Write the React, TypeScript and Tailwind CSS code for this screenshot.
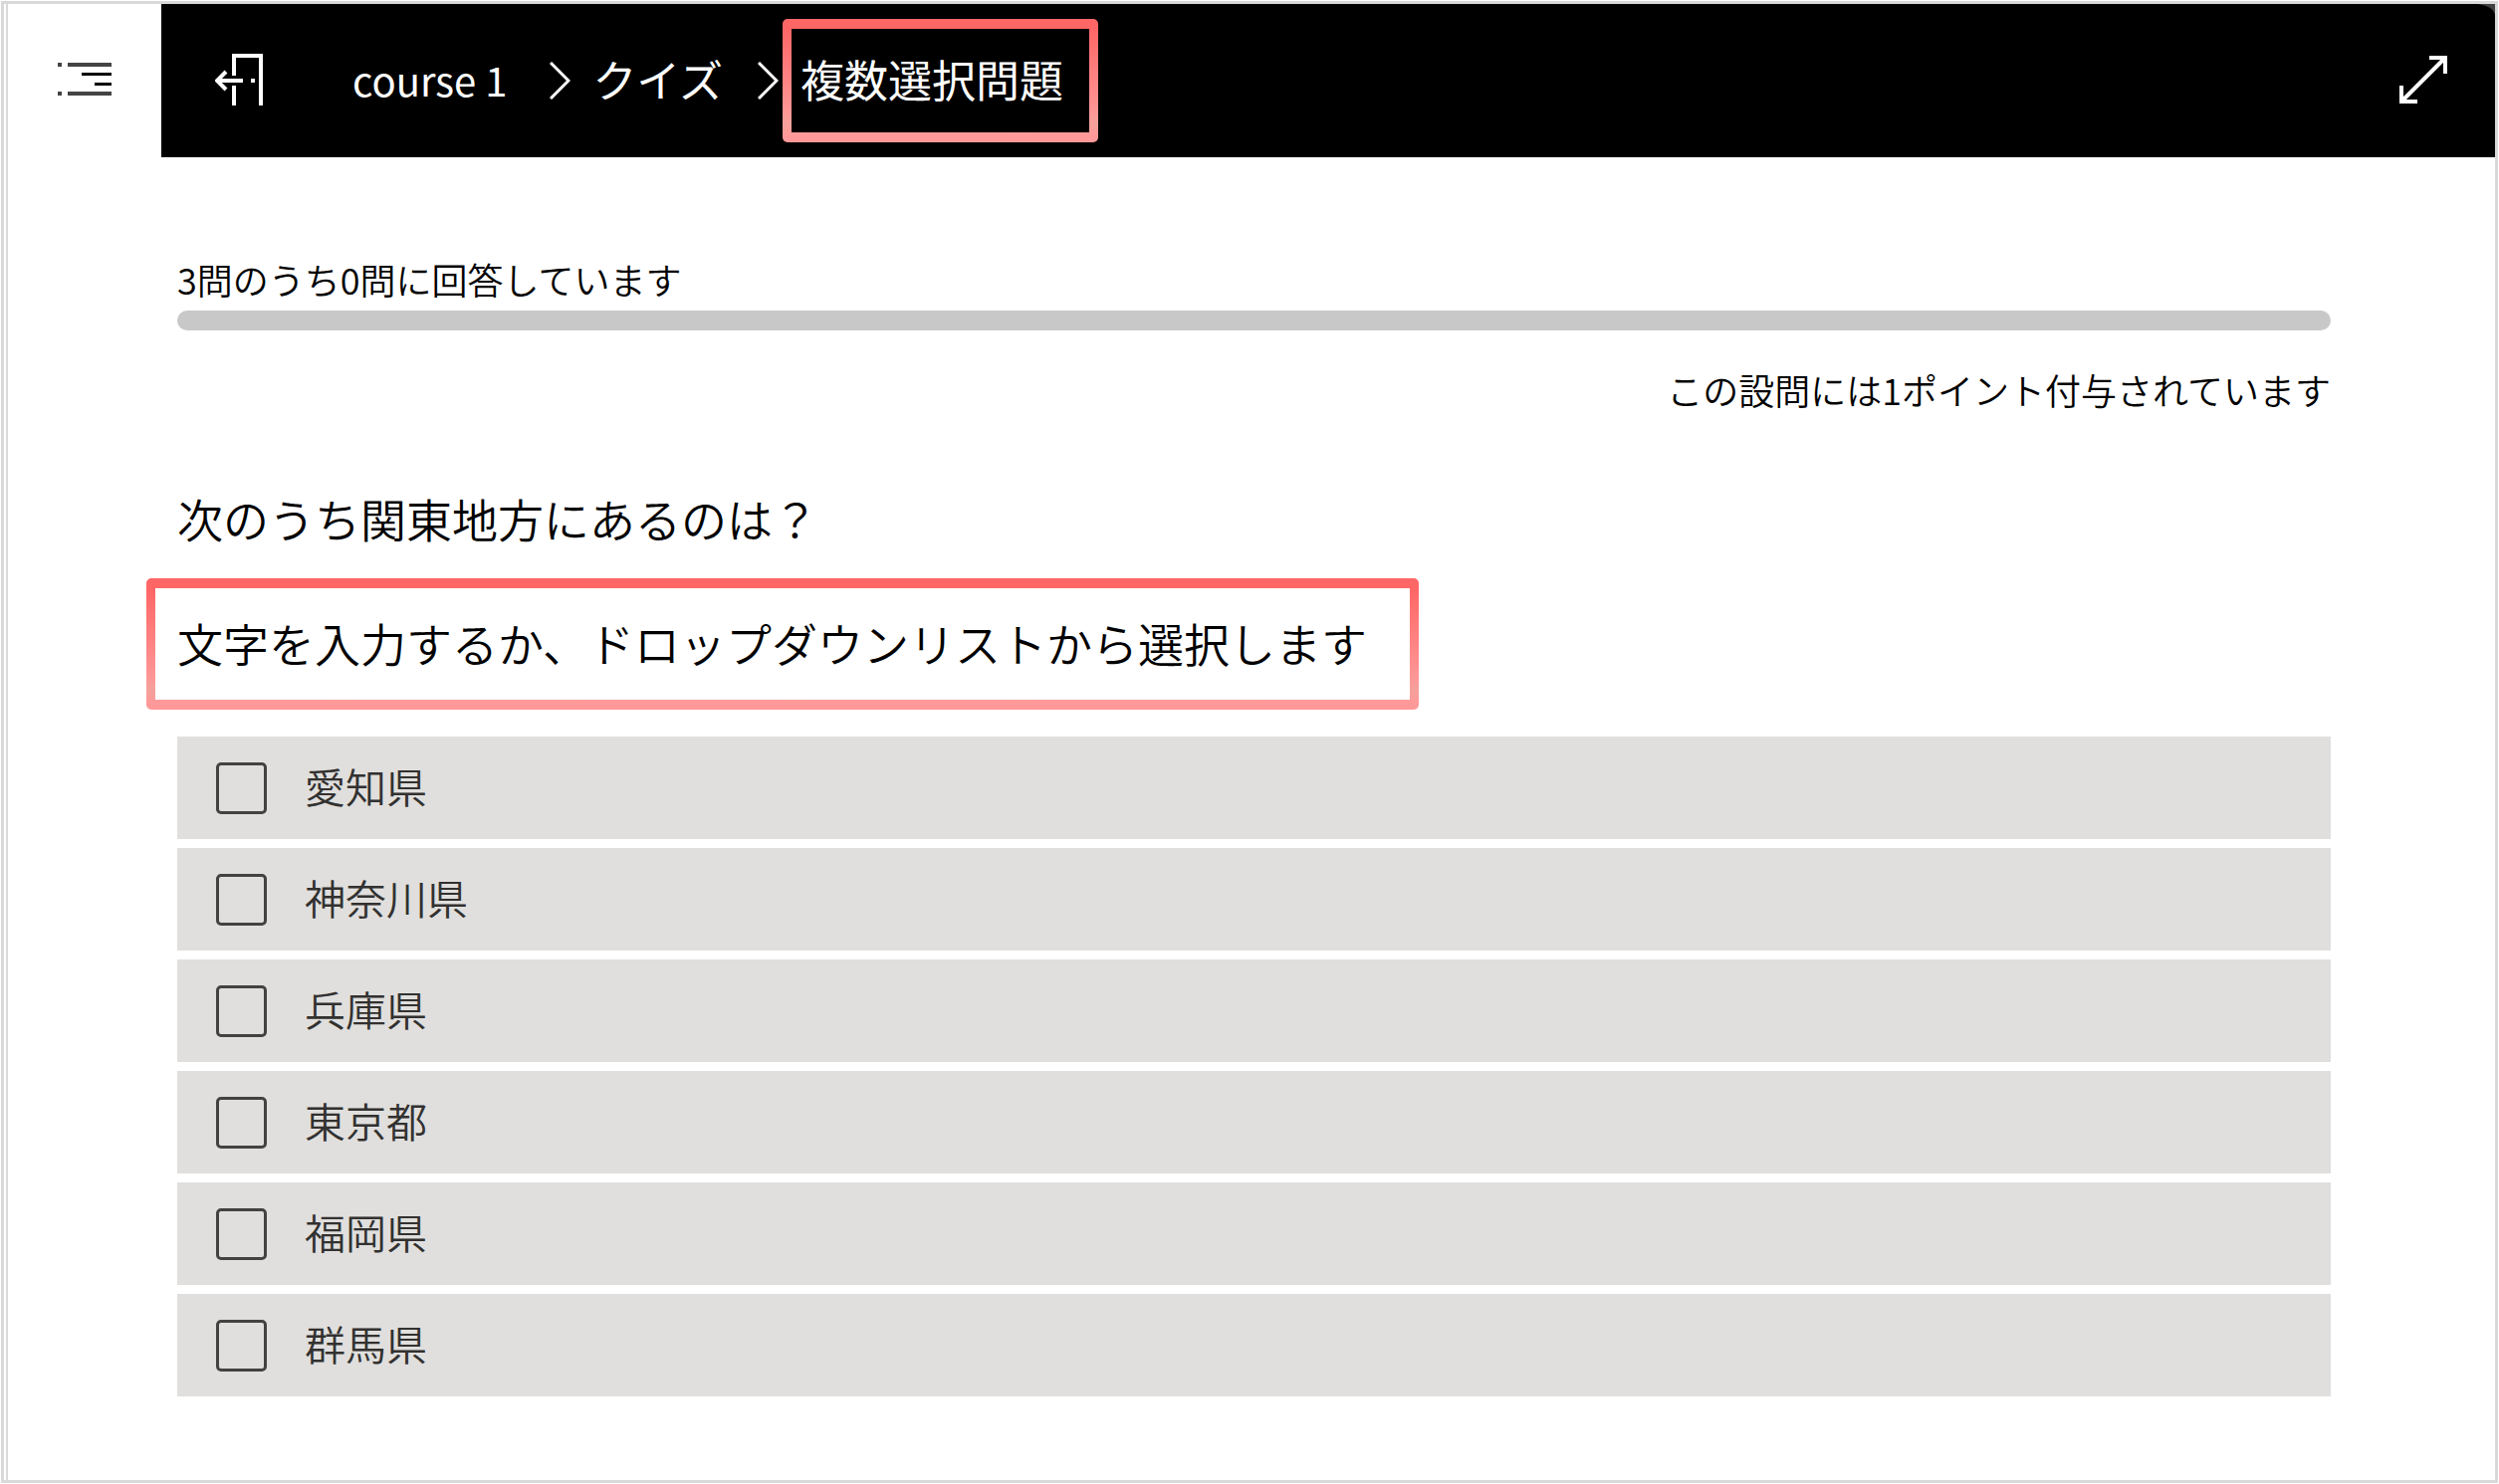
import { ReactNode, useState } from "react";
import clsx from "clsx";

const choices = [
  "愛知県",
  "神奈川県",
  "兵庫県",
  "東京都",
  "福岡県",
  "群馬県",
];

export default function App() {
  return (
    <div className="flex min-h-screen bg-white p-px font-['Noto_Sans_CJK_JP',sans-serif] font-[350] text-black">
      <div className="flex grow border-3 border-[#d9d9d9] pl-0.5">
        <div className="flex grow border-l-2 border-[#d9d9d9]">
          <aside className="w-[154px] shrink-0">
            <button
              type="button"
              aria-label="目次"
              className="flex h-[154px] w-full items-start pt-[54px] pl-[50px]"
            >
              <ListIcon />
            </button>
          </aside>
          <div className="flex min-w-0 grow flex-col">
            <Header />
            <Quiz />
          </div>
        </div>
      </div>
    </div>
  );
}

function Header() {
  return (
    <header className="bg-[#404040]">
      <div className="flex h-[154px] items-center justify-between rounded-tr-[20px_12px] bg-black pr-12 pl-[54px] text-white">
        <div className="flex items-center">
          <button type="button" aria-label="終了" className="pb-0.5">
            <ExitIcon />
          </button>
          <nav aria-label="パンくず">
            <ol className="flex items-center pl-[90px] text-[44px] leading-[64px] font-normal">
              <li className="pb-1">
                <a href="#course" className="text-[40px]">
                  course 1
                </a>
              </li>
              <li className="flex items-center">
                <Chevron className="mr-[22px] ml-[43px]" />
                <a href="#quiz" className="pb-1">
                  クイズ
                </a>
              </li>
              <li className="flex items-center">
                <Chevron className="mr-1 ml-[35px]" />
                <Highlight className="bg-black pt-[18px] pr-[26px] pb-[22px] pl-[9px]">
                  <span aria-current="page">複数選択問題</span>
                </Highlight>
              </li>
            </ol>
          </nav>
        </div>
        <button type="button" aria-label="全画面表示" className="pb-0.5">
          <ExpandIcon />
        </button>
      </div>
    </header>
  );
}

function Quiz() {
  const [checked, setChecked] = useState<string[]>([]);

  const toggle = (name: string) =>
    setChecked((prev) =>
      prev.includes(name) ? prev.filter((c) => c !== name) : [...prev, name]
    );

  return (
    <main className="pt-[98px] pr-[165px] pb-20 pl-4">
      <p className="text-[36px] leading-[48px]">
        3問のうち0問に回答しています
      </p>
      <div
        role="progressbar"
        aria-label="回答状況"
        aria-valuemin={0}
        aria-valuemax={3}
        aria-valuenow={0}
        className="mt-2 h-5 rounded-full bg-[#c8c8c8]"
      />
      <p className="mt-[35px] text-right text-[36px] leading-[48px]">
        この設問には1ポイント付与されています
      </p>
      <h1 className="mt-[73px] text-[46px] leading-[64px]">
        次のうち関東地方にあるのは？
      </h1>
      <div className="mt-[29px] -ml-[31px] flex">
        <Highlight className="bg-white pt-[22px] pr-[43px] pb-[26px] pl-[22px]">
          <p className="text-[46px] leading-[64px]">
            文字を入力するか、ドロップダウンリストから選択します
          </p>
        </Highlight>
      </div>
      <ul className="mt-[27px] flex flex-col gap-[9px]">
        {choices.map((name) => (
          <li key={name}>
            <label className="flex h-[103px] items-center gap-[38px] bg-[#e0dfdd] pl-[39px] text-[41px] text-[#323130]">
              <input
                type="checkbox"
                checked={checked.includes(name)}
                onChange={() => toggle(name)}
                className="h-13 w-[51px] appearance-none rounded-[5px] border-3 border-[#444240] checked:bg-[#444240]"
              />
              <span className="pb-1">{name}</span>
            </label>
          </li>
        ))}
      </ul>
    </main>
  );
}

function Highlight({
  className,
  children,
}: {
  className: string;
  children: ReactNode;
}) {
  return (
    <div className="rounded-[5px] bg-[linear-gradient(#ff6666_8%,#ff9696_75%,#f4a19b_85%,#ff9999_95%)] px-[9px] py-2.5">
      <div className={clsx(className)}>{children}</div>
    </div>
  );
}

function ListIcon() {
  return (
    <svg width="54" height="40" viewBox="0 0 54 40" fill="#000">
      <path
        fill="#444"
        d="M0 5h4v4H0zM10 5h44v4H10zM0 34h4v4H0zM10 34h44v4H10z"
      />
      <path d="M24 15h30v3H24zM37 25h17v3H37z" />
    </svg>
  );
}

function ExitIcon() {
  return (
    <svg
      width="48"
      height="54"
      viewBox="0 0 48 54"
      fill="none"
      stroke="currentColor"
      strokeWidth="4"
    >
      <path d="M19 23V3h27v50M19 33v20" />
      <path d="M2 28h26M11 19l-9 9 9 9" />
      <path d="M36 28h4" />
    </svg>
  );
}

function Chevron({ className }: { className: string }) {
  return (
    <svg
      width="21"
      height="38"
      viewBox="0 0 21 38"
      fill="none"
      stroke="currentColor"
      strokeWidth="3"
      className={clsx("shrink-0", className)}
    >
      <path d="M1 1l18 18L1 37" />
    </svg>
  );
}

function ExpandIcon() {
  return (
    <svg
      width="48"
      height="48"
      viewBox="0 0 48 48"
      fill="none"
      stroke="currentColor"
      strokeWidth="4"
    >
      <path d="M30 2h16v16M18 46H2V30M46 2L2 46" />
    </svg>
  );
}
